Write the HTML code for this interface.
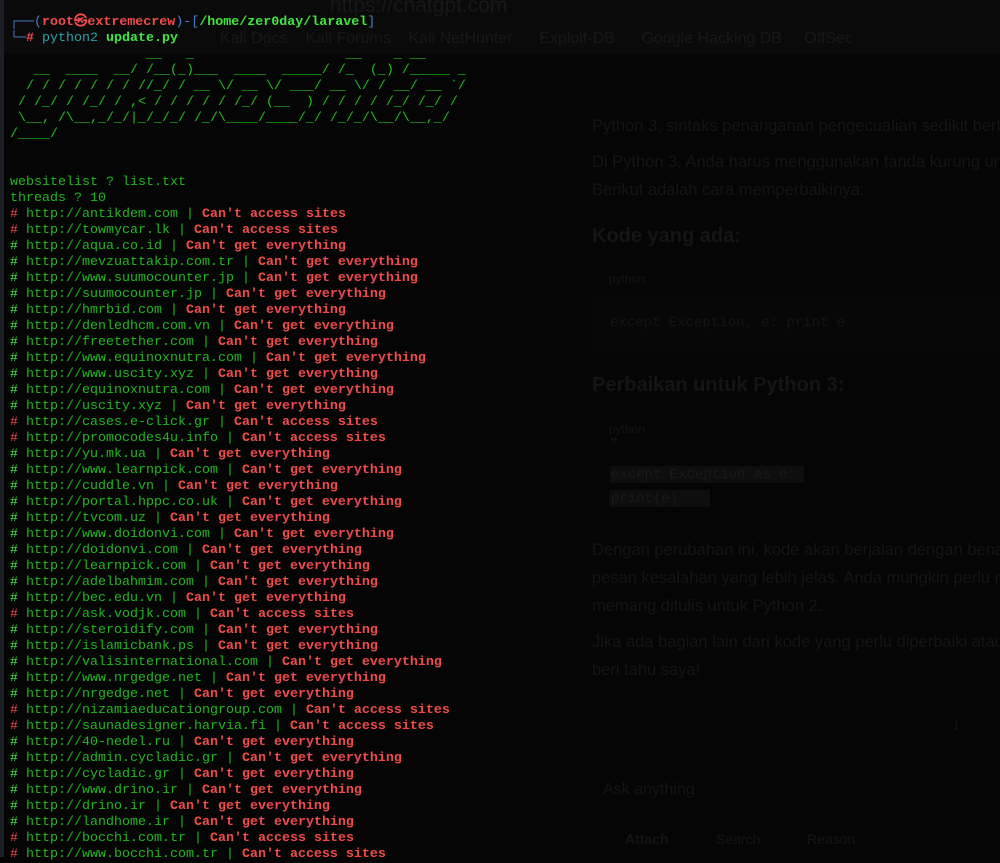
<!DOCTYPE html>
<html><head><meta charset="utf-8"><style>
html,body{margin:0;padding:0;width:1000px;height:857px;overflow:hidden;background:#050505;}
.bg{position:absolute;font-family:"Liberation Sans",sans-serif;color:#151515;white-space:nowrap;}
#term{position:absolute;left:10px;top:15px;font-family:"Liberation Mono","DejaVu Sans Mono",monospace;font-size:13.33px;line-height:16px;white-space:pre;color:#1fb81f;}
.r{color:#f24b4b;font-weight:bold}
.hr{color:#f24b4b}
.hg{color:#46ee46}
.b{font-weight:bold}
.bl{color:#4a7fd0}
.cy{color:#2aa1a8}
.g2{color:#3ee83e;font-weight:bold}
</style></head><body>
<div style="position:absolute;left:0;top:0;width:1000px;height:54px;background:#0a0a0a"></div>
<div style="position:absolute;left:0;top:0;width:4px;height:857px;background:#1e1f26"></div>
<div class="bg" style="left:330px;top:-6px;font-size:21px;color:#181818">https://chatgpt.com</div>
<div class="bg" style="left:220px;top:30px;font-size:16px;color:#181818">Kali Docs &nbsp;&nbsp; Kali Forums &nbsp;&nbsp; Kali NetHunter &nbsp;&nbsp;&nbsp;&nbsp; Exploit-DB &nbsp;&nbsp;&nbsp;&nbsp; Google Hacking DB &nbsp;&nbsp;&nbsp; OffSec</div>
<div class="bg" style="left:592px;top:117px;font-size:16.5px">Python 3, sintaks penanganan pengecualian sedikit berbeda</div>
<div class="bg" style="left:592px;top:153px;font-size:16.5px">Di Python 3, Anda harus menggunakan tanda kurung untuk</div>
<div class="bg" style="left:592px;top:181px;font-size:16.5px">Berikut adalah cara memperbaikinya:</div>
<div class="bg" style="left:592px;top:225px;font-size:20px;font-weight:bold">Kode yang ada:</div>
<div class="bg" style="left:609px;top:272px;font-size:12px">python</div>
<div style="position:absolute;left:592px;top:296px;width:408px;height:56px;background:#070707"></div>
<div class="bg" style="left:610px;top:315px;font-family:'Liberation Mono',monospace;font-size:14px">except Exception, e: print e</div>
<div class="bg" style="left:592px;top:374px;font-size:20px;font-weight:bold">Perbaikan untuk Python 3:</div>
<div class="bg" style="left:609px;top:422px;font-size:12px">python</div>
<div class="bg" style="left:610px;top:436px;font-size:16px;font-weight:bold">”</div>
<div style="position:absolute;left:610px;top:466px;width:194px;height:17px;background:#0e0e0e"></div>
<div style="position:absolute;left:609px;top:490px;width:101px;height:17px;background:#0e0e0e"></div>
<div class="bg" style="left:611px;top:467px;font-family:'Liberation Mono',monospace;font-size:14px;color:#1a1a1a">except Exception as e:</div>
<div class="bg" style="left:611px;top:491px;font-family:'Liberation Mono',monospace;font-size:14px;color:#1a1a1a">    print(e)</div>
<div class="bg" style="left:592px;top:541px;font-size:16.5px">Dengan perubahan ini, kode akan berjalan dengan benar di</div>
<div class="bg" style="left:592px;top:569px;font-size:16.5px">pesan kesalahan yang lebih jelas. Anda mungkin perlu mem</div>
<div class="bg" style="left:592px;top:597px;font-size:16.5px">memang ditulis untuk Python 2.</div>
<div class="bg" style="left:592px;top:633px;font-size:16.5px">Jika ada bagian lain dari kode yang perlu diperbaiki atau jika</div>
<div class="bg" style="left:592px;top:661px;font-size:16.5px">beri tahu saya!</div>
<div class="bg" style="left:952px;top:714px;font-size:18px">↓</div>
<div class="bg" style="left:603px;top:781px;font-size:16px">Ask anything</div>
<div class="bg" style="left:625px;top:831px;font-size:14px;font-weight:bold">Attach</div>
<div class="bg" style="left:716px;top:831px;font-size:14px">Search</div>
<div class="bg" style="left:807px;top:831px;font-size:14px">Reason</div>
<div id="term"><span class="bl">┌──(</span><span class="r">root㉿extremecrew</span><span class="bl">)-[</span><span class="g2">/home/zer0day/laravel</span><span class="bl">]</span>
<span class="bl">└─</span><span class="r">#</span> <span class="cy">python2</span> <span class="g2">update.py</span>
<span style="color:#22c322">                 __   _                   __    _ __
   __  ____  __/ /__(_)___  ____  _____/ /_  (_) /_____ _
  / / / / / / / //_/ / __ \/ __ \/ ___/ __ \/ / __/ __ `/
 / /_/ / /_/ / ,&lt; / / / / / /_/ (__  ) / / / / /_/ /_/ /
 \__, /\__,_/_/|_/_/_/ /_/\____/____/_/ /_/_/\__/\__,_/
/____/</span>


websitelist ? list.txt
threads ? 10
<span class="hr">#</span> http://antikdem.com | <span class="r">Can't access sites</span>
<span class="hr">#</span> http://towmycar.lk | <span class="r">Can't access sites</span>
<span class="hg">#</span> http://aqua.co.id | <span class="r">Can't get everything</span>
<span class="hg">#</span> http://mevzuattakip.com.tr | <span class="r">Can't get everything</span>
<span class="hg">#</span> http://www.suumocounter.jp | <span class="r">Can't get everything</span>
<span class="hg">#</span> http://suumocounter.jp | <span class="r">Can't get everything</span>
<span class="hg">#</span> http://hmrbid.com | <span class="r">Can't get everything</span>
<span class="hg">#</span> http://denledhcm.com.vn | <span class="r">Can't get everything</span>
<span class="hg">#</span> http://freetether.com | <span class="r">Can't get everything</span>
<span class="hg">#</span> http://www.equinoxnutra.com | <span class="r">Can't get everything</span>
<span class="hg">#</span> http://www.uscity.xyz | <span class="r">Can't get everything</span>
<span class="hg">#</span> http://equinoxnutra.com | <span class="r">Can't get everything</span>
<span class="hg">#</span> http://uscity.xyz | <span class="r">Can't get everything</span>
<span class="hr">#</span> http://cases.e-click.gr | <span class="r">Can't access sites</span>
<span class="hr">#</span> http://promocodes4u.info | <span class="r">Can't access sites</span>
<span class="hg">#</span> http://yu.mk.ua | <span class="r">Can't get everything</span>
<span class="hg">#</span> http://www.learnpick.com | <span class="r">Can't get everything</span>
<span class="hg">#</span> http://cuddle.vn | <span class="r">Can't get everything</span>
<span class="hg">#</span> http://portal.hppc.co.uk | <span class="r">Can't get everything</span>
<span class="hg">#</span> http://tvcom.uz | <span class="r">Can't get everything</span>
<span class="hg">#</span> http://www.doidonvi.com | <span class="r">Can't get everything</span>
<span class="hg">#</span> http://doidonvi.com | <span class="r">Can't get everything</span>
<span class="hg">#</span> http://learnpick.com | <span class="r">Can't get everything</span>
<span class="hg">#</span> http://adelbahmim.com | <span class="r">Can't get everything</span>
<span class="hg">#</span> http://bec.edu.vn | <span class="r">Can't get everything</span>
<span class="hr">#</span> http://ask.vodjk.com | <span class="r">Can't access sites</span>
<span class="hg">#</span> http://steroidify.com | <span class="r">Can't get everything</span>
<span class="hg">#</span> http://islamicbank.ps | <span class="r">Can't get everything</span>
<span class="hg">#</span> http://valisinternational.com | <span class="r">Can't get everything</span>
<span class="hg">#</span> http://www.nrgedge.net | <span class="r">Can't get everything</span>
<span class="hg">#</span> http://nrgedge.net | <span class="r">Can't get everything</span>
<span class="hr">#</span> http://nizamiaeducationgroup.com | <span class="r">Can't access sites</span>
<span class="hr">#</span> http://saunadesigner.harvia.fi | <span class="r">Can't access sites</span>
<span class="hg">#</span> http://40-nedel.ru | <span class="r">Can't get everything</span>
<span class="hg">#</span> http://admin.cycladic.gr | <span class="r">Can't get everything</span>
<span class="hg">#</span> http://cycladic.gr | <span class="r">Can't get everything</span>
<span class="hg">#</span> http://www.drino.ir | <span class="r">Can't get everything</span>
<span class="hg">#</span> http://drino.ir | <span class="r">Can't get everything</span>
<span class="hg">#</span> http://landhome.ir | <span class="r">Can't get everything</span>
<span class="hr">#</span> http://bocchi.com.tr | <span class="r">Can't access sites</span>
<span class="hr">#</span> http://www.bocchi.com.tr | <span class="r">Can't access sites</span></div>
</body></html>
